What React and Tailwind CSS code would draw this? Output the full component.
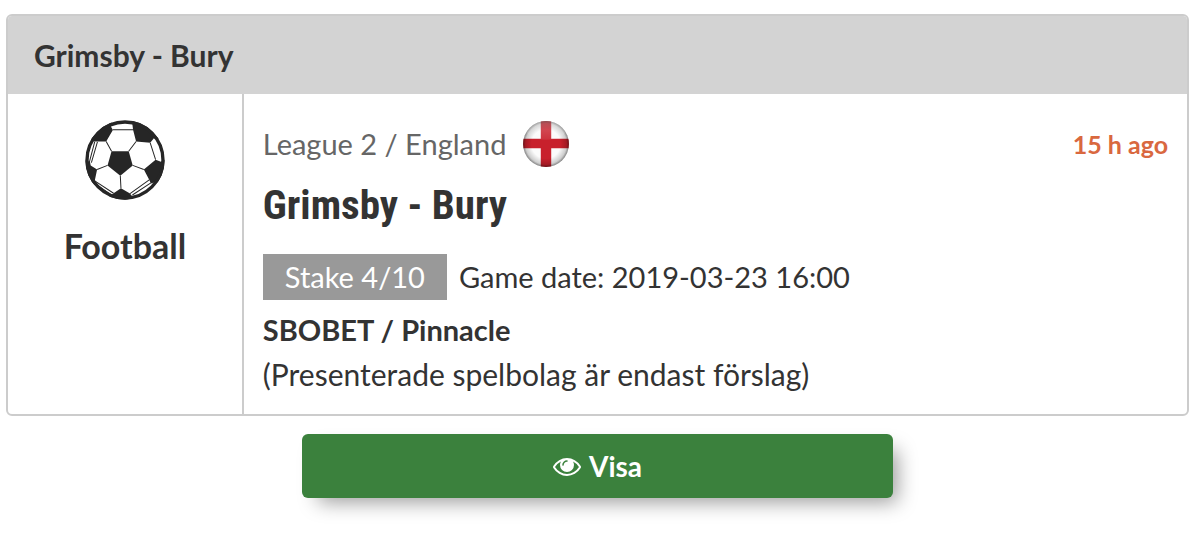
import React from "react";

const tip = {
  match: "Grimsby - Bury",
  sport: "Football",
  league: "League 2 / England",
  posted: "15 h ago",
  stake: "Stake 4/10",
  gameDate: "2019-03-23 16:00",
  bookmakers: "SBOBET / Pinnacle",
  note: "(Presenterade spelbolag är endast förslag)",
};

const FootballIcon = () => (
  <svg viewBox="47 33 238 238" className="w-20 h-20" aria-hidden="true">
    <defs>
      <clipPath id="ball">
        <circle cx="166" cy="152" r="118" />
      </clipPath>
    </defs>
    <circle cx="166" cy="152" r="114" fill="#fff" />
    <g clipPath="url(#ball)" fill="#262626">
      <path d="M126 126L177 126L189 168L152 199L114 168Z" />
      <path d="M120 30L130 45L124 52L130 63L110 97L76 97L60 92L50 80Z" />
      <path d="M186 30L190 62L199 97L241 101L252 87L270 90L250 40Z" />
      <path d="M62 158L64 168L83 180L76 214L80 228L60 225L40 150Z" />
      <path d="M222 180L257 151L273 157L290 150L280 210L243 222L238 211Z" />
      <path d="M154 236L181 252L190 264L150 280L115 264L132 251Z" />
    </g>
    <g fill="none" stroke="#262626" strokeWidth="3">
      <path d="M126 126L110 97M177 126L199 97M189 168L222 180M152 199L154 236M114 168L83 180" />
      <path d="M130 62L192 62M76 97L60 158M84 98L66 160M241 101L257 151" />
      <path d="M76 214L132 251M80 224L125 256M238 211L181 252M243 220L188 256" />
    </g>
    <circle
      cx="166"
      cy="152"
      r="113"
      fill="none"
      stroke="#262626"
      strokeWidth="10"
    />
  </svg>
);

const EnglandFlag = () => (
  <svg viewBox="0 0 46 46" className="w-12 h-12" role="img" aria-label="England">
    <defs>
      <clipPath id="flag">
        <circle cx="23" cy="23" r="22" />
      </clipPath>
      <radialGradient id="shade" cx="50%" cy="50%" r="50%">
        <stop offset="60%" stopColor="#000" stopOpacity="0" />
        <stop offset="85%" stopColor="#000" stopOpacity="0.18" />
        <stop offset="100%" stopColor="#000" stopOpacity="0.6" />
      </radialGradient>
      <linearGradient id="gloss" x1="0" y1="0" x2="0" y2="1">
        <stop offset="0%" stopColor="#fff" stopOpacity="0.25" />
        <stop offset="100%" stopColor="#fff" stopOpacity="0.08" />
      </linearGradient>
    </defs>
    <g clipPath="url(#flag)">
      <rect width="46" height="46" fill="#fbfbfb" />
      <path d="M18 0h10v18h18v9H28v19H18V27H0v-9h18z" fill="#c8202c" />
      <rect width="46" height="46" fill="url(#shade)" />
      <ellipse cx="23" cy="10" rx="19" ry="9" fill="url(#gloss)" />
    </g>
  </svg>
);

const EyeIcon = () => (
  <svg
    viewBox="0 0 1792 1792"
    className="w-7 h-7"
    fill="currentColor"
    aria-hidden="true"
  >
    <path d="M1664 960q-152-236-381-353 61 104 61 225 0 185-131.5 316.5t-316.5 131.5-316.5-131.5-131.5-316.5q0-121 61-225-229 117-381 353 133 205 333.5 326.5t434.5 121.5 434.5-121.5 333.5-326.5zm-720-384q0-20-14-34t-34-14q-125 0-214.5 89.5t-89.5 214.5q0 20 14 34t34 14 34-14 14-34q0-86 61-147t147-61q20 0 34-14t14-34zm848 384q0 34-20 69-140 230-376.5 368.5t-499.5 138.5-499.5-139-376.5-368q-20-35-20-69t20-69q140-229 376.5-368t499.5-139 499.5 139 376.5 368q20 35 20 69z" />
  </svg>
);

const TipCard = ({ tip }) => {
  return (
    <article className="border-2 border-[#ccc] rounded-md overflow-hidden">
      <header className="bg-[#d3d3d3] px-[26px] py-5 text-[30px] leading-[38px] font-bold">
        {tip.match}
      </header>
      <div className="flex">
        <div className="w-1/5 shrink-0 border-r-2 border-[#ccc] pt-[26px] flex flex-col items-center">
          <FootballIcon />
          <p className="mt-6 text-[34px] leading-[44px] font-bold">
            {tip.sport}
          </p>
        </div>
        <div className="grow px-[19px] pt-[26px] pb-[18px]">
          <div className="flex items-center justify-between">
            <div className="flex items-center gap-4 text-[29px] leading-[44px] text-[#666]">
              <span>{tip.league}</span>
              <EnglandFlag />
            </div>
            <time className="text-[25px] leading-[44px] font-bold text-[#d9683f]">
              {tip.posted}
            </time>
          </div>
          <h2 className="mt-3 font-['Roboto_Condensed','Liberation_Sans_Narrow','Roboto',sans-serif] text-[41px] leading-[50px] font-bold">
            {tip.match}
          </h2>
          <div className="mt-6 flex items-center gap-3 text-[29px] leading-[46px]">
            <span className="bg-[#999] text-white px-[22px]">{tip.stake}</span>
            <span>Game date: {tip.gameDate}</span>
          </div>
          <p className="mt-2 text-[29px] leading-[44px] font-bold">
            {tip.bookmakers}
          </p>
          <p className="text-[30px] leading-[44px]">{tip.note}</p>
        </div>
      </div>
    </article>
  );
};

const App = () => {
  return (
    <main className="font-['Lato',sans-serif] text-[#333] bg-white pt-[14px] pb-12 pl-1.5 pr-[11px]">
      <TipCard tip={tip} />
      <button
        type="button"
        className="mt-[18px] mx-auto w-1/2 h-16 flex items-center justify-center gap-2 rounded-md bg-[#3b813d] text-white text-[28px] font-bold shadow-[10px_10px_20px_-6px_rgba(0,0,0,0.4)] cursor-pointer"
      >
        <EyeIcon />
        Visa
      </button>
    </main>
  );
};

export default App;
